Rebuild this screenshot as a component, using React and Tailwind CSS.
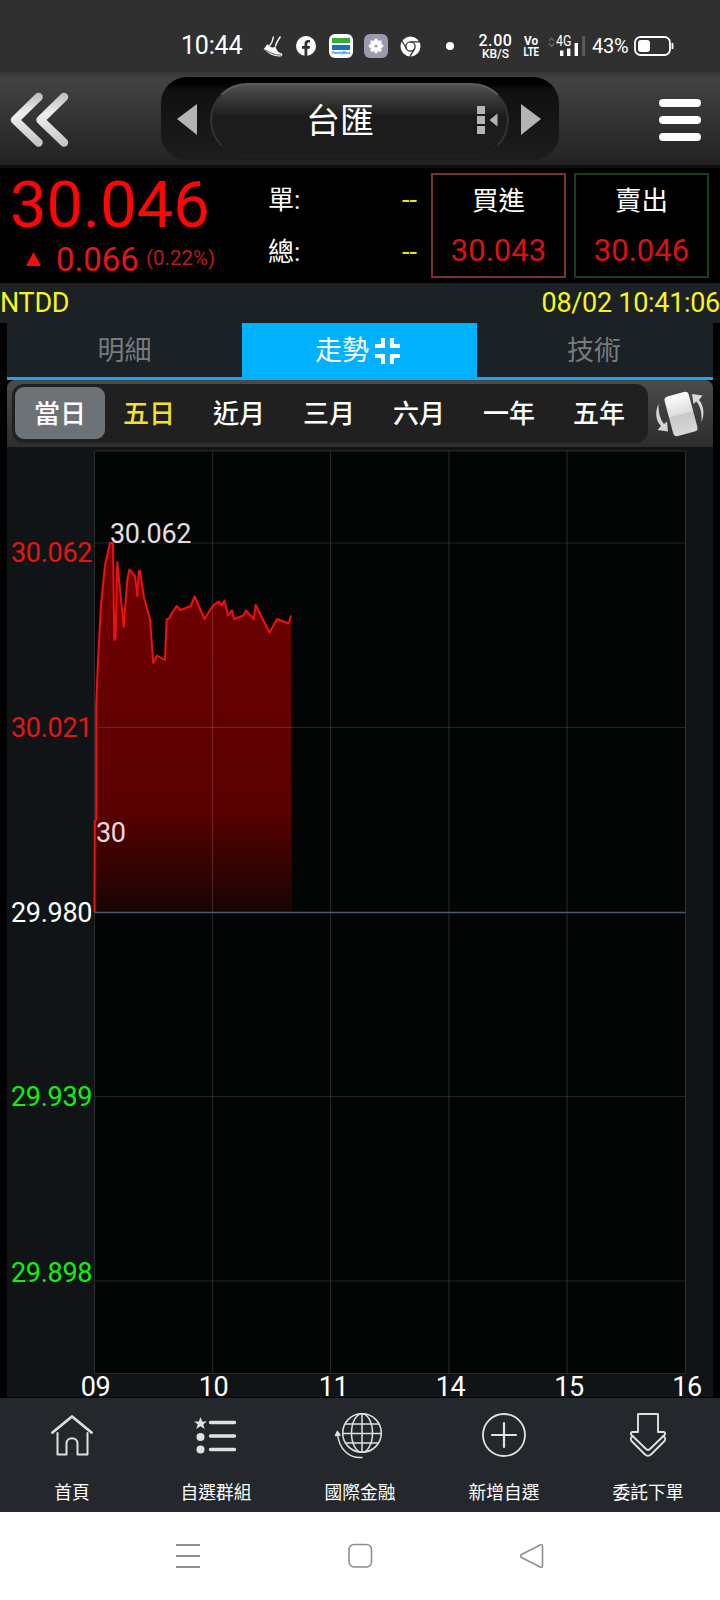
const PERIODS = ["當日", "五日", "近月", "三月", "六月", "一年", "五年"];

const GRID_X = [94.5, 212.5, 330.5, 449, 567, 685.5];
const GRID_Y = [451, 543, 727.5, 1096.5, 1281, 1373.5];

const HOURS = [
  { x: 95.5, label: "09" },
  { x: 213.5, label: "10" },
  { x: 333.5, label: "11" },
  { x: 450.5, label: "14" },
  { x: 569, label: "15" },
  { x: 687, label: "16" },
];

const PRICES = [
  { y: 562, label: "30.062", color: "#e81414" },
  { y: 737, label: "30.021", color: "#e81414" },
  { y: 921.5, label: "29.980", color: "#ffffff" },
  { y: 1106, label: "29.939", color: "#10f010" },
  { y: 1281.5, label: "29.898", color: "#10f010" },
];

// [x, y] points of today's prices
const SERIES = [
  [94.5, 912], [94.8, 821], [96.2, 820], [96.2, 705], [98, 660], [101, 605], [105, 565], [110, 543],
  [113, 543], [114.3, 640], [115.6, 638], [117.3, 562], [123.7, 627], [127.3, 580], [129.3, 569.5],
  [135, 576], [137.3, 596], [138.8, 571], [140, 571], [144, 597.5], [150, 619], [153.3, 663], [157, 655.5],
  [165, 660], [166.7, 619.5], [169, 618.5], [172.7, 611.5], [176.7, 606], [180.5, 610], [190.7, 606],
  [194.7, 596.5], [204.5, 619], [212.5, 606], [218.5, 601.5], [222, 605.5], [224.5, 600.5], [228, 615],
  [232, 610.5], [234, 619], [243.5, 615.5], [246, 610.5], [253.7, 619], [255.7, 605], [269.5, 632.5],
  [277, 619], [288.7, 623.5], [291, 615.5],
];

function StatusBar() {
  return (
    <div className="h-[72px] flex items-start bg-[#303030] text-white pt-[32px] pl-[181px]">
      <span className="w-[62px] text-[25px] leading-[28px] tracking-[-0.2px] whitespace-nowrap">10:44</span>
      <svg className="ml-[19px] mt-[2px]" width="22" height="24" viewBox="0 0 22 24" fill="none">
        <path d="M11.500 2.500C11 6 10 9 7.500 12M18.500 2.500C16 6 14 9 13.500 12.500" stroke="#fff" strokeWidth="1.400" />
        <path d="M5.500 10 1.500 15.500C5 17 8 22.500 18 22.500 20 22.500 21 21 20 19.500 17 19 14.500 17 13.500 12.500 11 14.500 7.500 13.500 5.500 10z" fill="#fff" />
        <path d="M2 15.800c5 1.200 8 5.500 17.500 5.200" stroke="#303030" strokeWidth=".8" />
      </svg>
      <svg className="ml-[12px] mt-[4px]" width="20" height="20" viewBox="0 0 20 20">
        <circle cx="10" cy="10" r="10" fill="#fff" />
        <path d="M8.500 20v-7.200H6V10h2.500V8c0-2.600 1.500-4 3.800-4 .9 0 1.700.1 1.700.1v2.400h-1.200c-1.200 0-1.500.7-1.500 1.500v2H14l-.4 2.800h-2.300V20z" fill="#303030" />
      </svg>
      <div className="ml-[13px] mt-[2px] w-6 h-6 rounded-[6px] bg-white flex flex-col items-center pt-[4px]">
        <div className="w-[18px] h-[5px] bg-[#3aa935]" />
        <div className="mt-[2px] w-[18px] h-[5px] bg-[#1272c4]" />
        <span className="mt-[1px] text-[3.5px] leading-[5px] font-bold text-[#1272c4]">FamilyMart</span>
      </div>
      <svg className="ml-[11px] mt-[2px]" width="24" height="24" viewBox="0 0 24 24">
        <rect width="24" height="24" rx="6" fill="#9c9aac" />
        <circle cx="12" cy="12" r="5.800" fill="#fff" />
        {[0, 45, 90, 135, 180, 225, 270, 315].map((a) => (
          <circle key={a} cx="12" cy="6.300" r="1.700" fill="#fff" transform={`rotate(${a} 12 12)`} />
        ))}
        <circle cx="12" cy="12" r="1.600" fill="#9fa08f" />
      </svg>
      <svg className="ml-[12px] mt-[4px]" width="21" height="21" viewBox="0 0 21 21" fill="none">
        <circle cx="10.500" cy="10.500" r="10" fill="#fff" />
        <g stroke="#303030" strokeWidth="1.300">
          <circle cx="10.500" cy="10.500" r="4.600" />
          <path d="M10.500 5.900H19.800M6.500 12.800 1.900 4.800M14.500 12.800 9.800 20.800" />
        </g>
      </svg>
      <div className="ml-[25px] mt-[10px] w-[8px] h-[8px] rounded-full bg-white" />
      <div className="ml-[24px] mt-[1px] w-[35px] text-center font-medium">
        <div className="text-[16px] leading-[15px] tracking-[0.6px]">2.00</div>
        <div className="text-[12px] leading-[12px]">KB/S</div>
      </div>
      <svg className="ml-[9px] mt-[2px] overflow-visible" width="18" height="24" viewBox="0 0 18 24" fontFamily="Roboto" fontWeight="700" fill="#fff">
        <text x="2" y="11" fontSize="12" textLength="14" lengthAdjust="spacingAndGlyphs">Vo</text>
        <text x="1.500" y="22" fontSize="12" textLength="15.500" lengthAdjust="spacingAndGlyphs">LTE</text>
      </svg>
      <svg className="ml-[8px] mt-[2px]" width="40" height="24" viewBox="0 0 40 24" fontFamily="Roboto">
        <path d="M1 7 3.500 4 6 7M1 9.500 3.500 12.500 6 9.500" fill="none" stroke="#666" strokeWidth="1.300" />
        <text x="8" y="12" fontSize="14" fill="#fff" textLength="15.500" lengthAdjust="spacingAndGlyphs">4G</text>
        <path d="M13.700 16.500V22M20.700 14.500V22M28.300 9V22" stroke="#fff" strokeWidth="3.400" />
        <path d="M35.700 2V22" stroke="#5a5a5a" strokeWidth="3" />
      </svg>
      <span className="ml-[4px] w-[37px] text-[20px] leading-[28px] tracking-[-0.3px] whitespace-nowrap">43%</span>
      <svg className="ml-[5px] mt-[4px]" width="41" height="20" viewBox="0 0 41 20" fill="none">
        <rect x="1" y="1" width="35" height="18" rx="5.500" stroke="#fff" strokeWidth="1.800" />
        <rect x="4" y="4" width="12" height="12" rx="3" fill="#fff" />
        <path d="M38.500 7v6" stroke="#fff" strokeWidth="1.800" />
      </svg>
    </div>
  );
}

function Header() {
  return (
    <div className="h-[96px] flex items-start bg-linear-to-b from-[#363636] via-[#434343] via-8% to-[#222] border-b-[3px] border-[#0e0e0e]">
      <svg className="ml-[10px] mt-[20px]" width="60" height="56" viewBox="0 0 60 56" fill="none">
        <defs>
          <linearGradient id="silver" x1="0" y1="0" x2="0" y2="56" gradientUnits="userSpaceOnUse">
            <stop stopColor="#b8b8b8" />
            <stop offset=".4" stopColor="#f0f0f0" />
            <stop offset="1" stopColor="#c0c0c0" />
          </linearGradient>
        </defs>
        <path d="M28.500 5 5 28 28.500 50.500M54 5 30.500 28 54 50.500" stroke="url(#silver)" strokeWidth="8.500" strokeLinecap="round" strokeLinejoin="round" />
      </svg>
      <div className="ml-[91px] mt-[5px] w-[398px] h-[83px] rounded-[26px] bg-linear-to-b from-black via-[#101010] via-15% to-[#1d1d1d] flex items-start">
        <svg className="ml-[16px] mt-[26px]" width="20" height="33" viewBox="0 0 20 33">
          <path d="M20 1v31L0 16z" fill="#b4b4b4" />
        </svg>
        <div className="ml-[13px] mt-[6px] w-[299px] h-[74px] rounded-full border-2 border-t-[#5c5c5c] border-x-[#333] border-b-[#202020] bg-linear-to-b from-[#505050] via-[#1c1c1c] via-45% to-[#1c1c1c] flex items-center">
          <span className="ml-[94px] mt-[2px] w-[70px] text-[34px] leading-[40px] text-white whitespace-nowrap">台匯</span>
          <svg className="ml-[101px]" width="21" height="30" viewBox="0 0 21 30" fill="#b4b4b4">
            <path d="M0 1h8v8H0zM0 11h8v8H0zM0 21h8v8H0zM20.500 8.500v13l-8-6.500z" />
          </svg>
        </div>
        <svg className="ml-[12px] mt-[26px]" width="20" height="33" viewBox="0 0 20 33">
          <path d="M0 1v31L20 16z" fill="#b4b4b4" />
        </svg>
      </div>
      <div className="ml-[100px] mt-[27px] flex flex-col gap-[9px]">
        <div className="w-[42px] h-[8px] rounded-full bg-white" />
        <div className="w-[42px] h-[8px] rounded-full bg-white" />
        <div className="w-[42px] h-[8px] rounded-full bg-white" />
      </div>
    </div>
  );
}

function Volume({ label }) {
  return (
    <div className="h-[52px] flex items-center justify-between">
      <span className="text-[26px] text-white">{label}</span>
      <span className="text-[27px] text-[#f0e420]">--</span>
    </div>
  );
}

function QuoteBox({ label, price, className }) {
  return (
    <div className={`w-[135px] h-[105px] border-2 flex flex-col items-center ${className}`}>
      <span className="mt-[5px] text-[26.5px] leading-[42px] text-white">{label}</span>
      <span className="mt-[11px] text-[31px] leading-[36px] text-[#d81212]">{price}</span>
    </div>
  );
}

function Quote() {
  return (
    <div className="h-[115px] flex bg-black">
      <div className="w-[268px] pl-[10px]">
        <div className="h-[74px] text-[65px] leading-[74px] text-[#ff0505]">30.046</div>
        <div className="h-[36px] flex items-start">
          <svg className="ml-[16px] mt-[10px]" width="15" height="15" viewBox="0 0 15 15">
            <path d="M7.500 0 15 14H0z" fill="#ff0a0a" />
          </svg>
          <span className="ml-[15px] w-[84px] text-[33px] leading-[36px] text-[#e21616]">0.066</span>
          <span className="ml-[6px] mt-[4px] text-[20.5px] leading-[24px] text-[#b81c1c]">(0.22%)</span>
        </div>
      </div>
      <div className="w-[149px] pt-[6px]">
        <Volume label="單:" />
        <Volume label="總:" />
      </div>
      <div className="ml-[14px] mt-[5px] flex gap-[8px]">
        <QuoteBox label="買進" price="30.043" className="border-[#7c3030]" />
        <QuoteBox label="賣出" price="30.046" className="border-[#184018]" />
      </div>
    </div>
  );
}

function Tabs() {
  return (
    <div className="mx-[7px] h-[57px] flex border-b-[3px] border-[#1aa8ec] bg-[#1b2124] text-[27px] leading-[56px] text-[#777c7e]">
      <div className="w-[235px] text-center">明細</div>
      <div className="w-[235px] pt-[1px] pr-[3px] flex items-center justify-center gap-[6px] bg-[#00b1ff] text-white">
        走勢
        <svg width="26" height="26" viewBox="0 0 26 26" fill="none" stroke="#fff" strokeWidth="4">
          <path d="M0 8H8V0M17 0V8H25M0 18H8V26M17 26V18H25" />
        </svg>
      </div>
      <div className="flex-1 pr-[2px] text-center">技術</div>
    </div>
  );
}

function PeriodBar() {
  return (
    <div className="mx-[7px] h-[67px] pl-[5px] pt-[4px] flex rounded-t-[8px] bg-linear-to-b from-[#4c4c4c] to-[#2d2d2d]">
      <div className="w-[636px] h-[59px] pl-[3px] pt-[3px] flex rounded-[12px] bg-[#202020]">
        {PERIODS.map((period, i) => (
          <div
            key={period}
            className={`w-[90px] h-[52px] rounded-[9px] text-center text-[26px] leading-[55px] font-medium ${i === 0 ? "bg-[#6d7276]" : "pr-[2px]"} ${i === 1 ? "text-[#f2e230]" : "text-white"}`}
          >
            {period}
          </div>
        ))}
      </div>
      <svg className="ml-[7px] mt-[6px]" width="50" height="48" viewBox="0 0 50 48">
        <defs>
          <linearGradient id="card" x1="0" y1="0" x2="0" y2="1">
            <stop stopColor="#fff" />
            <stop offset=".5" stopColor="#dcdcdc" />
            <stop offset=".52" stopColor="#c8c8c8" />
            <stop offset="1" stopColor="#d8d8d8" />
          </linearGradient>
        </defs>
        <rect x="13.500" y="3.500" width="25" height="41" rx="4" fill="url(#card)" transform="rotate(-15 26 24)" />
        <path d="M3.500 14C-.5 23 1 31 6 36L2.500 40 13 41.500 12 31.500 9 34C5 29 3.500 23 3.500 14z" fill="#d4d4d4" />
        <path d="M46.500 32c3.500-8 2-17-2.500-22l3.500-4.500L37 4l1.500 10 3-2.500c4 5 5.500 11 5 20.500z" fill="#d8d8d8" />
      </svg>
    </div>
  );
}

function Chart() {
  const line = SERIES.map((p) => p.join(",")).join(" ");
  return (
    <svg className="block mx-[7px] bg-[#111416] overflow-visible tracking-[-0.3px]" width="706" height="951" viewBox="7 447 706 951" fontFamily="Roboto" fontSize="27">
      <defs>
        <linearGradient id="fall" x1="0" y1="543" x2="0" y2="912" gradientUnits="userSpaceOnUse">
          <stop stopColor="#720000" />
          <stop offset=".72" stopColor="#5a0000" />
          <stop offset="1" stopColor="#180404" />
        </linearGradient>
      </defs>
      <rect x="94.500" y="451" width="591" height="922.500" fill="#030504" />
      <polygon points={`${line} 292,912`} fill="url(#fall)" />
      <g stroke="#fff" strokeOpacity=".13" strokeWidth="1.200">
        {GRID_X.map((x) => <path key={x} d={`M${x} 451V1373.500`} />)}
        {GRID_Y.map((y) => <path key={y} d={`M94.500 ${y}H685.500`} />)}
      </g>
      <path d="M94.500 912.500H685.500" stroke="#4d5b68" strokeWidth="1.500" />
      <polyline points={line} fill="none" stroke="#f01010" strokeWidth="2" strokeLinejoin="round" />
      {PRICES.map((p) => (
        <text key={p.label} x="11" y={p.y} fill={p.color}>{p.label}</text>
      ))}
      {HOURS.map((h) => (
        <text key={h.label} x={h.x} y="1395.500" textAnchor="middle" fill="#fff">{h.label}</text>
      ))}
      <text x="110" y="543" fill="#e0e0e0">30.062</text>
      <text x="96" y="841.500" fill="#ecd8d8">30</text>
      <path d="M7 1397.500H713" stroke="#050606" />
    </svg>
  );
}

const NAV = [
  {
    label: "首頁",
    icon: (
      <g strokeWidth="2">
        <path d="M4.500 22.500 24 6.500 43.500 22.500" strokeWidth="2.800" />
        <path d="M9.500 23V44.500H18.500V33.500C18.500 26.500 29.500 26.500 29.500 33.500V44.500H39.500V23" />
      </g>
    ),
  },
  {
    label: "自選群組",
    icon: (
      <>
        <path d="M18.500 12.500H42.500M18.500 26H42.500M18.500 39.500H42.500" strokeWidth="3.400" />
        <path d="M8.500 7 10.200 11.500H15L11.300 14.300 12.700 19 8.500 16.300 4.300 19 5.700 14.300 2 11.500H6.800z" fill="#e0e0e0" stroke="none" />
        <circle cx="8.500" cy="27" r="4" fill="#e0e0e0" stroke="none" />
        <circle cx="8.500" cy="39.500" r="4" fill="#e0e0e0" stroke="none" />
      </>
    ),
  },
  {
    label: "國際金融",
    icon: (
      <g strokeWidth="1.500">
        <circle cx="26" cy="23" r="19.300" />
        <ellipse cx="26" cy="23" rx="10.500" ry="19.300" />
        <path d="M26 4V42M7 23.500H45M9.500 14H42.500M9.500 33H42.500" />
        <path d="M1.500 24C3 39 13 48.500 26 47.500" />
        <path d="M-.5 25.500 1.300 21.500 4 25z" fill="#e0e0e0" />
      </g>
    ),
  },
  {
    label: "新增自選",
    icon: (
      <>
        <circle cx="24" cy="25" r="21" strokeWidth="1.800" />
        <path d="M24 13V37M12 25H36" />
      </>
    ),
  },
  {
    label: "委託下單",
    icon: (
      <g strokeWidth="1.900">
        <path d="M14 4H34V22H39.500C41.500 22 41.500 24 40.500 25L26 39C24.500 40.500 23.500 40.500 22 39L7.500 25C6.500 24 6.500 22 8.500 22H14z" />
        <path d="M8.500 26C6.500 28 6 29 7.500 31L20.500 44C23 46.500 25 46.500 27.500 44L40.500 31C42 29 41.500 28 39.500 26" />
      </g>
    ),
  },
];

function BottomNav() {
  return (
    <div className="h-[114px] flex bg-[#24282c]">
      {NAV.map((item) => (
        <div key={item.label} className="flex-1 flex flex-col items-center pt-[12px]">
          <svg width="48" height="50" viewBox="0 0 48 50" fill="none" stroke="#e0e0e0" strokeWidth="2.200" strokeLinecap="round" strokeLinejoin="round" overflow="visible">
            {item.icon}
          </svg>
          <span className="mt-[20px] text-[17.7px] leading-[26px] text-white">{item.label}</span>
        </div>
      ))}
    </div>
  );
}

function SystemNav() {
  return (
    <div className="h-[88px] flex items-center justify-center gap-[147px] bg-white">
      <svg width="25" height="26" viewBox="0 0 25 26" fill="none" stroke="#8e8e8e" strokeWidth="1.800">
        <path d="M0 2H24M0 13H24M0 24H24" />
      </svg>
      <svg width="25" height="26" viewBox="0 0 25 26" fill="none" stroke="#8e8e8e" strokeWidth="1.600">
        <rect x="1" y="1.500" width="22.500" height="22.500" rx="5" />
      </svg>
      <svg width="25" height="26" viewBox="0 0 25 26" fill="none" stroke="#8e8e8e" strokeWidth="1.600" strokeLinejoin="round">
        <path d="M1.500 11.500 20 2C21.500 1.300 22.500 2 22.500 3.500V22.500C22.500 24 21.500 24.700 20 24L1.500 14.500C.5 13.800 .5 12.200 1.500 11.500z" />
      </svg>
    </div>
  );
}

export default function App() {
  return (
    <div className="w-[720px] h-[1600px] overflow-hidden bg-black font-['Roboto','Noto_Sans_CJK_TC',sans-serif]">
      <StatusBar />
      <Header />
      <Quote />
      <div className="h-[40px] flex justify-between bg-[#1b2124] text-[27px] leading-[40px] tracking-[-0.3px] text-[#f5f520]">
        <span>NTDD</span>
        <span>08/02 10:41:06</span>
      </div>
      <Tabs />
      <PeriodBar />
      <Chart />
      <BottomNav />
      <SystemNav />
    </div>
  );
}
